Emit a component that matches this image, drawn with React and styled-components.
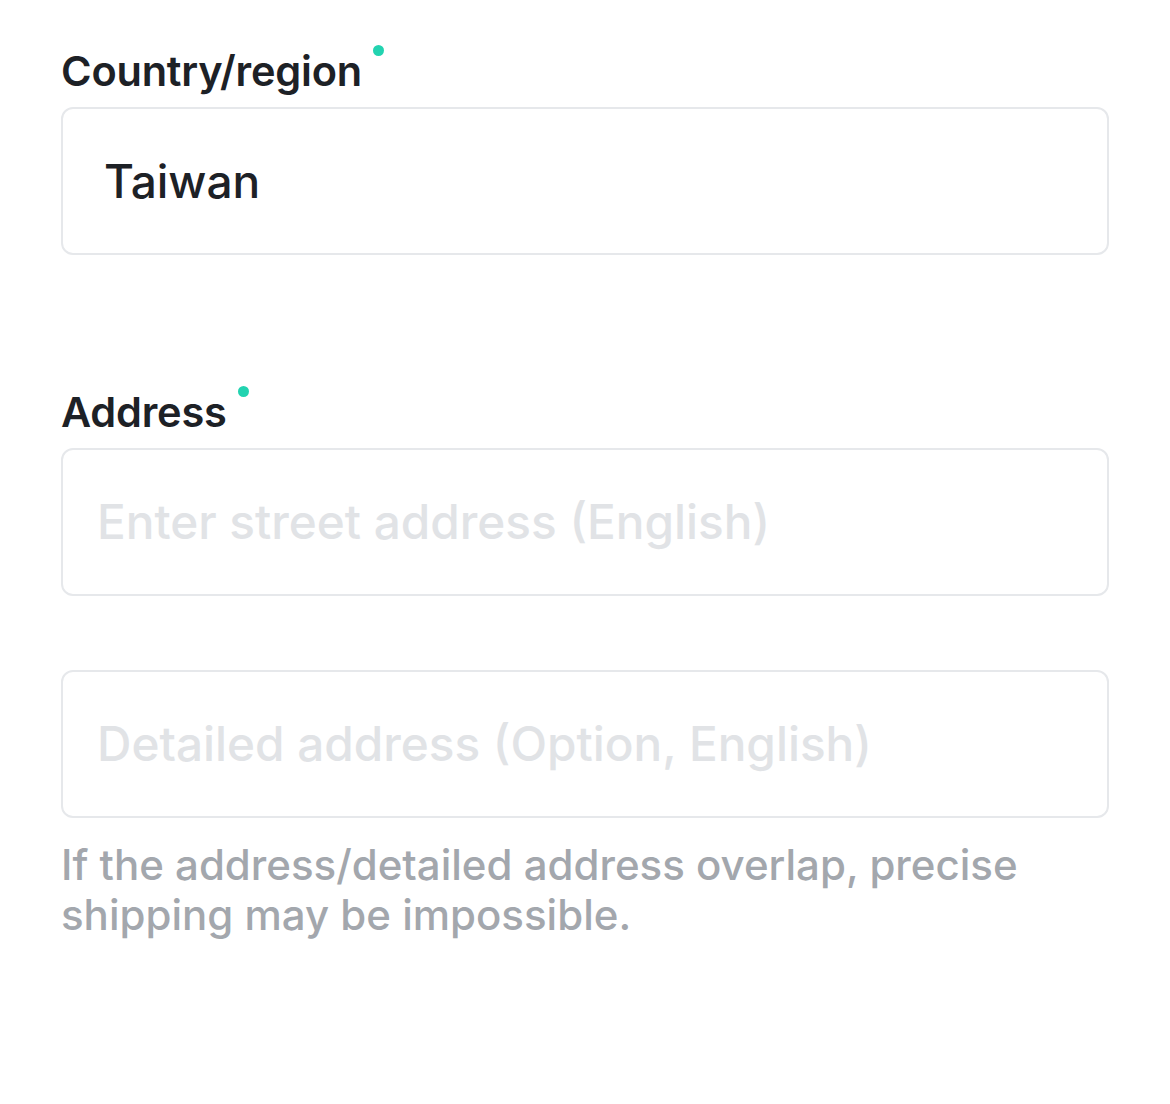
import React from "react";
import styled, { createGlobalStyle } from "styled-components";

const Global = createGlobalStyle`
  html, body { margin: 0; padding: 0; background: #ffffff; }
  body { font-family: Inter, "Noto Sans", sans-serif; -webkit-font-smoothing: antialiased; }
`;

const Page = styled.div`
  width: 1170px;
  height: 1104px;
  box-sizing: border-box;
  padding: 42px 61px 0 61px;
  display: flex;
  flex-direction: column;
`;

const Field = styled.section`
  display: flex;
  flex-direction: column;
  margin-bottom: ${(p) => p.$gapAfter || 0}px;
`;

const Label = styled.div`
  position: relative;
  align-self: flex-start;
  font-size: 41.5px;
  font-weight: 600;
  color: #1d2126;
  line-height: 58px;
  margin-bottom: 7px;
  letter-spacing: -0.2px;
`;

const Dot = styled.span`
  position: absolute;
  top: 3px;
  right: -22px;
  width: 11px;
  height: 11px;
  border-radius: 50%;
  background: #22d3b0;
`;

const Box = styled.div`
  box-sizing: border-box;
  width: 1048px;
  height: 148px;
  border: 2px solid #e6e8eb;
  border-radius: 12px;
  display: flex;
  align-items: center;
  padding-left: ${(p) => p.$pad}px;
  font-size: ${(p) => (p.$placeholder ? 47.7 : 46)}px;
  font-weight: 500;
  color: ${(p) => (p.$placeholder ? "#e1e3e6" : "#1d2126")};
  margin-bottom: ${(p) => p.$mb || 0}px;
`;

const Help = styled.p`
  margin: 22px 0 0 0;
  font-size: 42px;
  line-height: 50px;
  font-weight: 500;
  color: #a3a7ad;
  width: 1048px;
`;

export default function App() {
  return (
    <>
      <Global />
      <Page>
        <Field $gapAfter={128}>
          <Label>
            Country/region
            <Dot />
          </Label>
          <Box $pad={41}>Taiwan</Box>
        </Field>
        <Field>
          <Label>
            Address
            <Dot />
          </Label>
          <Box $pad={34} $placeholder $mb={74}>
            Enter street address (English)
          </Box>
          <Box $pad={34} $placeholder>
            Detailed address (Option, English)
          </Box>
          <Help>
            If the address/detailed address overlap, precise
            <br />
            shipping may be impossible.
          </Help>
        </Field>
      </Page>
    </>
  );
}
